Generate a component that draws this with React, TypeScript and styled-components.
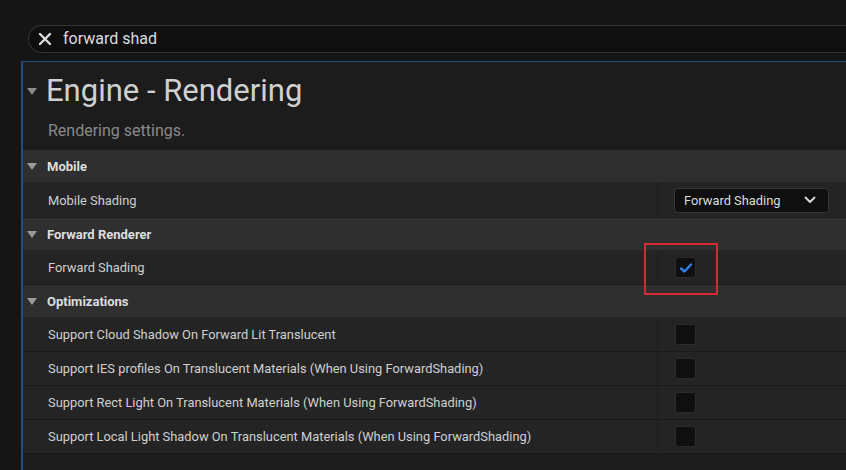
import React from "react";
import styled, { createGlobalStyle } from "styled-components";

const Global = createGlobalStyle`
  html, body { margin: 0; padding: 0; background: #151515; }
  body { font-family: Roboto, "Liberation Sans", sans-serif; overflow: hidden; }
  * { box-sizing: border-box; }
`;

const Page = styled.div`
  width: 846px;
  height: 470px;
  padding-top: 25px;
  display: flex;
  flex-direction: column;
  overflow: hidden;
`;

const SearchBar = styled.div`
  margin-left: 28px;
  height: 28px;
  display: flex;
  align-items: center;
  background: #0f0f0f;
  border: 1px solid #343434;
  border-right: none;
  border-radius: 14px 0 0 14px;
  padding-left: 9px;
  gap: 11px;
`;

const SearchText = styled.span`
  color: #dcdcdc;
  font-size: 16px;
  line-height: 20px;
`;

const Panel = styled.div`
  margin-top: 8px;
  margin-left: 21px;
  flex: 1;
  background: #1c1c1c;
  border-left: 2px solid #22507e;
  border-top: 1px solid #22507e;
  display: flex;
  flex-direction: column;
`;

const TitleRow = styled.div`
  display: flex;
  align-items: center;
  padding: 11px 0 0 4px;
  gap: 9px;
`;

const Title = styled.h1`
  margin: 0;
  font-weight: 400;
  font-size: 31px;
  line-height: 36px;
  color: #d0d0d0;
`;

const Subtitle = styled.div`
  margin: 12px 0 9px 25px;
  font-size: 16px;
  line-height: 20px;
  color: #8a8a8a;
`;

const Tri = styled.span<{ $c?: string }>`
  width: 0;
  height: 0;
  border-left: 5.5px solid transparent;
  border-right: 5.5px solid transparent;
  border-top: 7px solid ${(p) => p.$c || "#9a9a9a"};
  flex: none;
`;

const Header = styled.div`
  height: 33px;
  display: flex;
  align-items: center;
  padding-left: 4px;
  gap: 10px;
  background: #2f2f2f;
  border-bottom: 1px solid #262626;
  font-weight: 700;
  font-size: 13px;
  color: #dedede;
`;

const Row = styled.div<{ $h?: number }>`
  height: ${(p) => p.$h || 34}px;
  display: grid;
  grid-template-columns: 634px 1fr;
  background: #242424;
  border-bottom: 1px solid #1a1a1a;
`;

const Label = styled.div`
  display: flex;
  align-items: center;
  padding-left: 25px;
  font-size: 12.87px;
  color: #d0d0d0;
  white-space: nowrap;
`;

const ValueCell = styled.div`
  position: relative;
  display: flex;
  align-items: center;
  padding-left: 16px;
  border-left: 1px solid #1d1d1d;
`;

const Dropdown = styled.div`
  width: 155px;
  height: 25px;
  display: flex;
  align-items: center;
  justify-content: space-between;
  padding: 0 12px 0 9px;
  background: #0f0f0f;
  border: 1px solid #363636;
  border-radius: 4px;
  font-size: 12.87px;
  color: #dcdcdc;
`;

const Check = styled.div`
  margin-left: 1px;
  width: 21px;
  height: 21px;
  background: #0f0f0f;
  border: 1px solid #2c2c2c;
  border-radius: 3px;
  display: flex;
  align-items: center;
  justify-content: center;
`;

const Highlight = styled.div`
  position: absolute;
  left: -14px;
  top: -8px;
  width: 74px;
  height: 52px;
  border: 2px solid #d42a38;
  pointer-events: none;
`;

const Close = () => (
  <svg width="14" height="14" viewBox="0 0 14 14">
    <path d="M2 2L12 12M12 2L2 12" stroke="#dcdcdc" strokeWidth="2.4" strokeLinecap="round" />
  </svg>
);

const Chevron = () => (
  <svg width="12" height="8" viewBox="0 0 12 8">
    <path d="M1.5 1.5L6 6L10.5 1.5" stroke="#dcdcdc" strokeWidth="1.8" fill="none" strokeLinecap="round" strokeLinejoin="round" />
  </svg>
);

const Tick = () => (
  <svg width="14" height="12" viewBox="0 0 14 12">
    <path d="M2 6.5L5.5 9.5L12 2.5" stroke="#2f7fe6" strokeWidth="2.4" fill="none" strokeLinecap="round" strokeLinejoin="round" />
  </svg>
);

const optimizations = [
  "Support Cloud Shadow On Forward Lit Translucent",
  "Support IES profiles On Translucent Materials (When Using ForwardShading)",
  "Support Rect Light On Translucent Materials (When Using ForwardShading)",
  "Support Local Light Shadow On Translucent Materials (When Using ForwardShading)",
];

export default function App() {
  return (
    <Page>
      <Global />
      <SearchBar>
        <Close />
        <SearchText>forward shad</SearchText>
      </SearchBar>
      <Panel>
        <TitleRow>
          <Tri $c="#8a8a8a" />
          <Title>Engine - Rendering</Title>
        </TitleRow>
        <Subtitle>Rendering settings.</Subtitle>

        <Header>
          <Tri />
          Mobile
        </Header>
        <Row $h={35}>
          <Label>Mobile Shading</Label>
          <ValueCell>
            <Dropdown>
              Forward Shading
              <Chevron />
            </Dropdown>
          </ValueCell>
        </Row>

        <Header>
          <Tri />
          Forward Renderer
        </Header>
        <Row>
          <Label>Forward Shading</Label>
          <ValueCell>
            <Check>
              <Tick />
            </Check>
            <Highlight />
          </ValueCell>
        </Row>

        <Header>
          <Tri />
          Optimizations
        </Header>
        {optimizations.map((t) => (
          <Row key={t}>
            <Label>{t}</Label>
            <ValueCell>
              <Check />
            </ValueCell>
          </Row>
        ))}
      </Panel>
    </Page>
  );
}
